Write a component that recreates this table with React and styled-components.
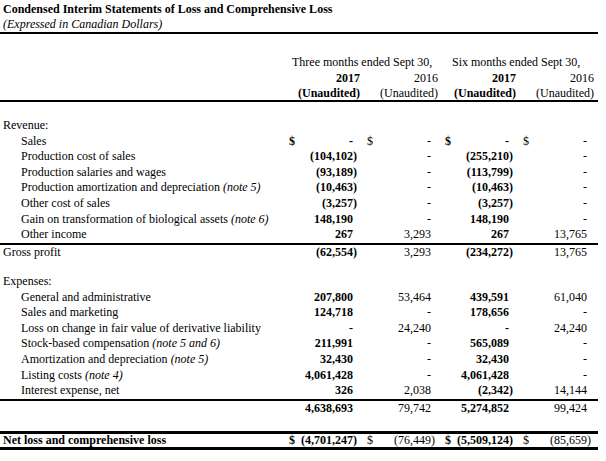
import * as React from "react";
import styled, { createGlobalStyle } from "styled-components";

const GlobalStyle = createGlobalStyle`
  body {
    margin: 0;
    background: #ffffff;
  }
`;

const Sheet = styled.div`
  width: 598px;
  padding-top: 1px;
  font-family: "Liberation Serif", "Times New Roman", serif;
  font-size: 12px;
  color: #000000;
`;

const TitleBlock = styled.div`
  border-bottom: 2px solid #000;
  margin-bottom: 20px;
`;

const Title = styled.div`
  font-weight: bold;
  line-height: 16px;
  padding-left: 3px;
`;

const Subtitle = styled.div`
  font-style: italic;
  line-height: 15px;
  padding-left: 3px;
`;

const Row = styled.div`
  display: grid;
  grid-template-columns: 286px repeat(4, 12px 66px);
  height: ${(p) => p.$h || 15.6}px;
  line-height: ${(p) => p.$h || 15.6}px;
  white-space: nowrap;
  border-top: ${(p) => (p.$thickTop ? "3px solid #000" : "none")};
  border-bottom: ${(p) =>
    p.$rule === "thick" ? "3px solid #000" : p.$rule ? "2px solid #000" : "none"};
  margin-top: ${(p) => p.$mt || 0}px;
`;

const Period = styled.div`
  grid-column: ${(p) => p.$col} / span 4;
  padding-left: ${(p) => p.$pad}px;
`;

const Head = styled.div`
  grid-column: ${(p) => p.$col} / span 2;
  text-align: right;
  padding-right: 4px;
  font-weight: ${(p) => (p.$bold ? "bold" : "normal")};
`;

const Label = styled.div`
  padding-left: ${(p) => (p.$indent ? 21 : 3)}px;
  font-weight: ${(p) => (p.$bold ? "bold" : "normal")};
`;

const Note = styled.i`
  font-style: italic;
`;

const Dollar = styled.div`
  padding-left: 3px;
  font-weight: ${(p) => (p.$bold ? "bold" : "normal")};
`;

const Value = styled.div`
  text-align: right;
  padding-right: ${(p) => (p.$paren ? 7 : 11)}px;
  font-weight: ${(p) => (p.$bold ? "bold" : "normal")};
`;

const Spacer = styled.div`
  height: ${(p) => p.$h}px;
`;

const revenue = [
  { label: "Revenue:" },
  { label: "Sales", indent: true, dollar: true, values: ["-", "-", "-", "-"] },
  { label: "Production cost of sales", indent: true, values: ["(104,102)", "-", "(255,210)", "-"] },
  { label: "Production salaries and wages", indent: true, values: ["(93,189)", "-", "(113,799)", "-"] },
  { label: "Production amortization and depreciation", note: "(note 5)", indent: true, values: ["(10,463)", "-", "(10,463)", "-"] },
  { label: "Other cost of sales", indent: true, values: ["(3,257)", "-", "(3,257)", "-"] },
  { label: "Gain on transformation of biological assets", note: "(note 6)", indent: true, values: ["148,190", "-", "148,190", "-"] },
  { label: "Other income", indent: true, rule: "thin", values: ["267", "3,293", "267", "13,765"] },
  { label: "Gross profit", values: ["(62,554)", "3,293", "(234,272)", "13,765"] },
];

const expenses = [
  { label: "Expenses:" },
  { label: "General and administrative", indent: true, values: ["207,800", "53,464", "439,591", "61,040"] },
  { label: "Sales and marketing", indent: true, values: ["124,718", "-", "178,656", "-"] },
  { label: "Loss on change in fair value of derivative liability", indent: true, values: ["-", "24,240", "-", "24,240"] },
  { label: "Stock-based compensation", note: "(note 5 and 6)", indent: true, values: ["211,991", "-", "565,089", "-"] },
  { label: "Amortization and depreciation", note: "(note 5)", indent: true, values: ["32,430", "-", "32,430", "-"] },
  { label: "Listing costs", note: "(note 4)", indent: true, values: ["4,061,428", "-", "4,061,428", "-"] },
  { label: "Interest expense, net", indent: true, rule: "thin", values: ["326", "2,038", "(2,342)", "14,144"] },
  { label: "", values: ["4,638,693", "79,742", "5,274,852", "99,424"] },
];

const netLoss = ["(4,701,247)", "(76,449)", "(5,509,124)", "(85,659)"];

// columns 1 and 3 (current year) are bold
const isBold = (i) => i % 2 === 0;

function Cells({ values, dollar }) {
  return values.map((v, i) => (
    <React.Fragment key={i}>
      <Dollar $bold={isBold(i)}>{dollar ? "$" : ""}</Dollar>
      <Value $bold={isBold(i)} $paren={v.startsWith("(")}>
        {v}
      </Value>
    </React.Fragment>
  ));
}

function LineItem({ row }) {
  return (
    <Row $rule={row.rule}>
      <Label $indent={row.indent}>
        {row.label}
        {row.note ? (
          <>
            {" "}
            <Note>{row.note}</Note>
          </>
        ) : null}
      </Label>
      {row.values ? <Cells values={row.values} dollar={row.dollar} /> : null}
    </Row>
  );
}

export default function App() {
  return (
    <>
      <GlobalStyle />
      <Sheet>
        <TitleBlock>
          <Title>Condensed Interim Statements of Loss and Comprehensive Loss</Title>
          <Subtitle>(Expressed in Canadian Dollars)</Subtitle>
        </TitleBlock>

        <Row $h={16}>
          <div />
          <Period $col={2} $pad={6}>Three months ended Sept 30,</Period>
          <Period $col={6} $pad={10}>Six months ended Sept 30,</Period>
        </Row>
        <Row $h={16}>
          <div />
          <Head $col={2} $bold>2017</Head>
          <Head $col={4}>2016</Head>
          <Head $col={6} $bold>2017</Head>
          <Head $col={8}>2016</Head>
        </Row>
        <Row $h={14} $rule="header">
          <div />
          <Head $col={2} $bold>(Unaudited)</Head>
          <Head $col={4}>(Unaudited)</Head>
          <Head $col={6} $bold>(Unaudited)</Head>
          <Head $col={8}>(Unaudited)</Head>
        </Row>

        <Spacer $h={16} />
        {revenue.map((row, i) => (
          <LineItem key={i} row={row} />
        ))}

        <Spacer $h={13.6} />
        {expenses.map((row, i) => (
          <LineItem key={i} row={row} />
        ))}

        <Row $h={13} $thickTop $rule="thick" $mt={14.6}>
          <Label $bold>Net loss and comprehensive loss</Label>
          <Cells values={netLoss} dollar />
        </Row>
      </Sheet>
    </>
  );
}
